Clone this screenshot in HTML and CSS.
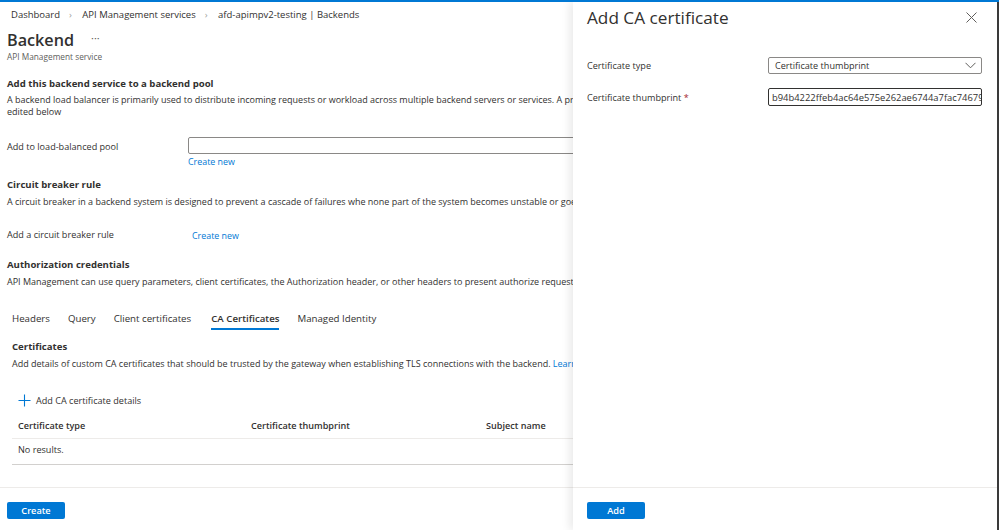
FILE: index.html
```html
<!DOCTYPE html>
<html lang="en">
<head>
    <meta charset="UTF-8">
    <title>Backend</title>
    <link rel="stylesheet" href="styles.css">
</head>
<body>
    <!-- Backend blade -->
    <div class="page">
        <div class="crumbs">
            <span>Dashboard</span><span class="sep">&rsaquo;</span>
            <span>API Management services</span><span class="sep">&rsaquo;</span>
            <span>afd-apimpv2-testing | Backends</span>
        </div>
        <div class="title-row">
            <h1>Backend</h1><span class="more">&middot;&middot;&middot;</span>
        </div>
        <div class="subtitle">API Management service</div>

        <h2>Add this backend service to a backend pool</h2>
        <p class="desc">A backend load balancer is primarily used to distribute incoming requests or workload across multiple backend servers or services. A priority and weight can be<br>edited below</p>

        <div class="row pool-row">
            <label>Add to load-balanced pool</label>
            <div>
                <div class="textbox"></div>
                <a class="link">Create new</a>
            </div>
        </div>

        <h2 class="h-circuit">Circuit breaker rule</h2>
        <p class="desc">A circuit breaker in a backend system is designed to prevent a cascade of failures whe none part of the system becomes unstable or goes down.</p>

        <div class="row rule-row">
            <label>Add a circuit breaker rule</label>
            <a class="link">Create new</a>
        </div>

        <h2 class="h-auth">Authorization credentials</h2>
        <p class="desc">API Management can use query parameters, client certificates, the Authorization header, or other headers to present authorize requests' credentials.</p>

        <div class="tabs">
            <span class="tab">Headers</span>
            <span class="tab">Query</span>
            <span class="tab">Client certificates</span>
            <span class="tab active">CA Certificates</span>
            <span class="tab">Managed Identity</span>
        </div>

        <div class="certs">
            <h2>Certificates</h2>
            <p class="desc">Add details of custom CA certificates that should be trusted by the gateway when establishing TLS connections with the backend. <a class="link">Learn more</a></p>

            <div class="add-cert">
                <svg width="13" height="13" viewBox="0 0 13 13"><path d="M6.5 0.5v12M0.5 6.5h12" stroke="#0078d4" stroke-width="1.1" fill="none"/></svg>
                <span>Add CA certificate details</span>
            </div>

            <div class="grid">
                <div class="grid-head">
                    <span class="c1">Certificate type</span>
                    <span class="c2">Certificate thumbprint</span>
                    <span class="c3">Subject name</span>
                </div>
                <div class="grid-empty">No results.</div>
            </div>
        </div>

        <div class="footer">
            <button class="primary">Create</button>
        </div>
    </div>

    <!-- Context pane -->
    <div class="pane">
        <div class="pane-head">
            <h1>Add CA certificate</h1>
            <svg class="close" width="11" height="11" viewBox="0 0 11 11"><path d="M0.5 0.5l10 10M10.5 0.5l-10 10" stroke="#605e5c" stroke-width="1" fill="none"/></svg>
        </div>
        <div class="field">
            <label>Certificate type</label>
            <div class="dropdown">
                <span>Certificate thumbprint</span>
                <svg width="11" height="7" viewBox="0 0 11 7"><path d="M0.5 0.8l5 5 5-5" stroke="#605e5c" stroke-width="1" fill="none"/></svg>
            </div>
        </div>
        <div class="field">
            <label>Certificate thumbprint <span class="req">*</span></label>
            <input class="input focused" type="text" value="b94b4222ffeb4ac64e575e262ae6744a7fac746791">
        </div>
        <div class="pane-foot">
            <button class="primary">Add</button>
        </div>
    </div>
</body>
</html>
```

FILE: styles.css
```css
body {
    margin: 0;
    font-family: "Open Sans", Arial, sans-serif;
    color: #323130;
    background: #fff;
    border-top: 2px solid #0078d4;
    height: 528px;
    overflow: hidden;
    position: relative;
}
.page {
    width: 566px;
    padding-left: 7px;
    height: 528px;
    position: relative;
    overflow: hidden;
}
.crumbs {
    font-size: 9.5px;
    padding: 6px 0 0 4px;
    height: 14px;
    line-height: 14px;
    white-space: nowrap;
}
.crumbs .sep {
    color: #a19f9d;
    margin: 0 8px 0 9px;
}
.title-row {
    display: flex;
    align-items: center;
    margin-top: 7px;
    height: 22px;
}
h1 {
    margin: 0;
    font-size: 16.2px;
    font-weight: 600;
}
.more {
    color: #605e5c;
    margin-left: 17px;
    font-size: 11px;
    line-height: 10px;
    margin-top: -4px;
}
.subtitle {
    font-size: 8.3px;
    color: #605e5c;
    line-height: 12px;
}
h2 {
    margin: 14px 0 0;
    font-size: 9.6px;
    font-weight: 700;
    line-height: 14px;
}
.desc {
    margin: 3px 0 0;
    font-size: 9px;
    line-height: 12px;
    white-space: nowrap;
}
.row {
    display: flex;
    font-size: 9.1px;
}
.row label {
    width: 181px;
    flex: none;
}
.pool-row {
    margin-top: 19px;
}
.pool-row label {
    padding-top: 3px;
}
.textbox {
    width: 520px;
    height: 15px;
    border: 1px solid #8a8886;
    border-radius: 2px;
}
.link {
    color: #0078d4;
    font-size: 8.9px;
    display: inline-block;
    line-height: 12px;
    margin-top: 2px;
}
.desc .link {
    font-size: 9px;
    margin: 0;
}
.h-circuit {
    margin-top: 10px;
}
.h-circuit + .desc {
    margin-top: 4px;
}
.rule-row {
    margin-top: 21px;
    line-height: 12px;
}
.rule-row label {
    width: 185px;
}
.rule-row .link {
    margin-top: 1px;
}
.h-auth {
    margin-top: 16px;
}
.h-auth + .desc {
    margin-top: 4px;
}
.tabs {
    display: flex;
    margin-top: 22px;
    padding-left: 5px;
    font-size: 9.7px;
    height: 22px;
}
.tab {
    margin-right: 18px;
    line-height: 17px;
}
.tab:nth-child(3) {
    margin-right: 20px;
}
.tab.active {
    font-weight: 600;
    border-bottom: 2px solid #0078d4;
    height: 18px;
}
.certs {
    padding-left: 5px;
}
.certs h2 {
    margin-top: 8px;
}
.certs .desc {
    margin-top: 4px;
}
.add-cert {
    display: flex;
    align-items: center;
    margin-top: 23px;
    padding-left: 6px;
    font-size: 9.1px;
    height: 14px;
}
.add-cert span {
    margin-left: 5px;
}
.grid {
    margin-top: 12px;
    width: 600px;
    font-size: 9.1px;
}
.grid-head {
    display: flex;
    height: 19px;
    line-height: 14px;
    border-bottom: 1px solid #edebe9;
    padding-left: 6px;
    font-weight: 600;
}
.grid-head .c1 { width: 233px; }
.grid-head .c2 { width: 235px; }
.grid-empty {
    height: 25px;
    line-height: 22px;
    padding-left: 6px;
    border-bottom: 1px solid #d2d0ce;
}
.footer {
    position: absolute;
    left: 0;
    right: 0;
    top: 485px;
    border-top: 1px solid #edebe9;
    padding: 14px 0 0 7px;
    display: flex;
}
button.primary {
    background: #0078d4;
    color: #fff;
    border: none;
    border-radius: 2px;
    font-family: "Open Sans", Arial, sans-serif;
    font-weight: 600;
    font-size: 9.2px;
    width: 58px;
    height: 17px;
    padding: 0;
}

/* context pane on top of the blade */
.pane {
    position: absolute;
    top: 0;
    left: 573px;
    width: 410px;
    height: 528px;
    background: #fff;
    padding-left: 14px;
    border-right: 2px solid #3a3a3a;
    box-shadow: -4px 0 8px rgba(0, 0, 0, 0.08);
}
.pane-head {
    display: flex;
    align-items: center;
    justify-content: space-between;
    height: 32px;
    margin-top: -1px;
}
.pane-head h1 {
    font-weight: 400;
    font-size: 17.2px;
}
.close {
    margin-right: 20px;
}
.field {
    display: flex;
    align-items: center;
    font-size: 9.1px;
    margin-top: 24px;
}
.field + .field {
    margin-top: 14px;
}
.field label {
    width: 181px;
    flex: none;
}
.req {
    color: #a4262c;
}
.dropdown, .input {
    width: 214px;
    height: 17px;
    box-sizing: border-box;
    border: 1px solid #8a8886;
    border-radius: 2px;
    display: flex;
    align-items: center;
    font-size: 9.1px;
    white-space: nowrap;
    overflow: hidden;
}
.dropdown {
    justify-content: space-between;
    padding: 0 5px 0 6px;
}
.input {
    height: 18px;
    padding: 0 0 0 3px;
    margin: 0;
    font-family: "Open Sans", Arial, sans-serif;
    font-size: 9.4px;
    color: #323130;
    outline: none;
}
.input.focused {
    border: 1.5px solid #323130;
}
.pane-foot {
    position: absolute;
    left: 0;
    right: 0;
    top: 485px;
    border-top: 1px solid #edebe9;
    padding: 14px 0 0 14px;
    display: flex;
}
```
